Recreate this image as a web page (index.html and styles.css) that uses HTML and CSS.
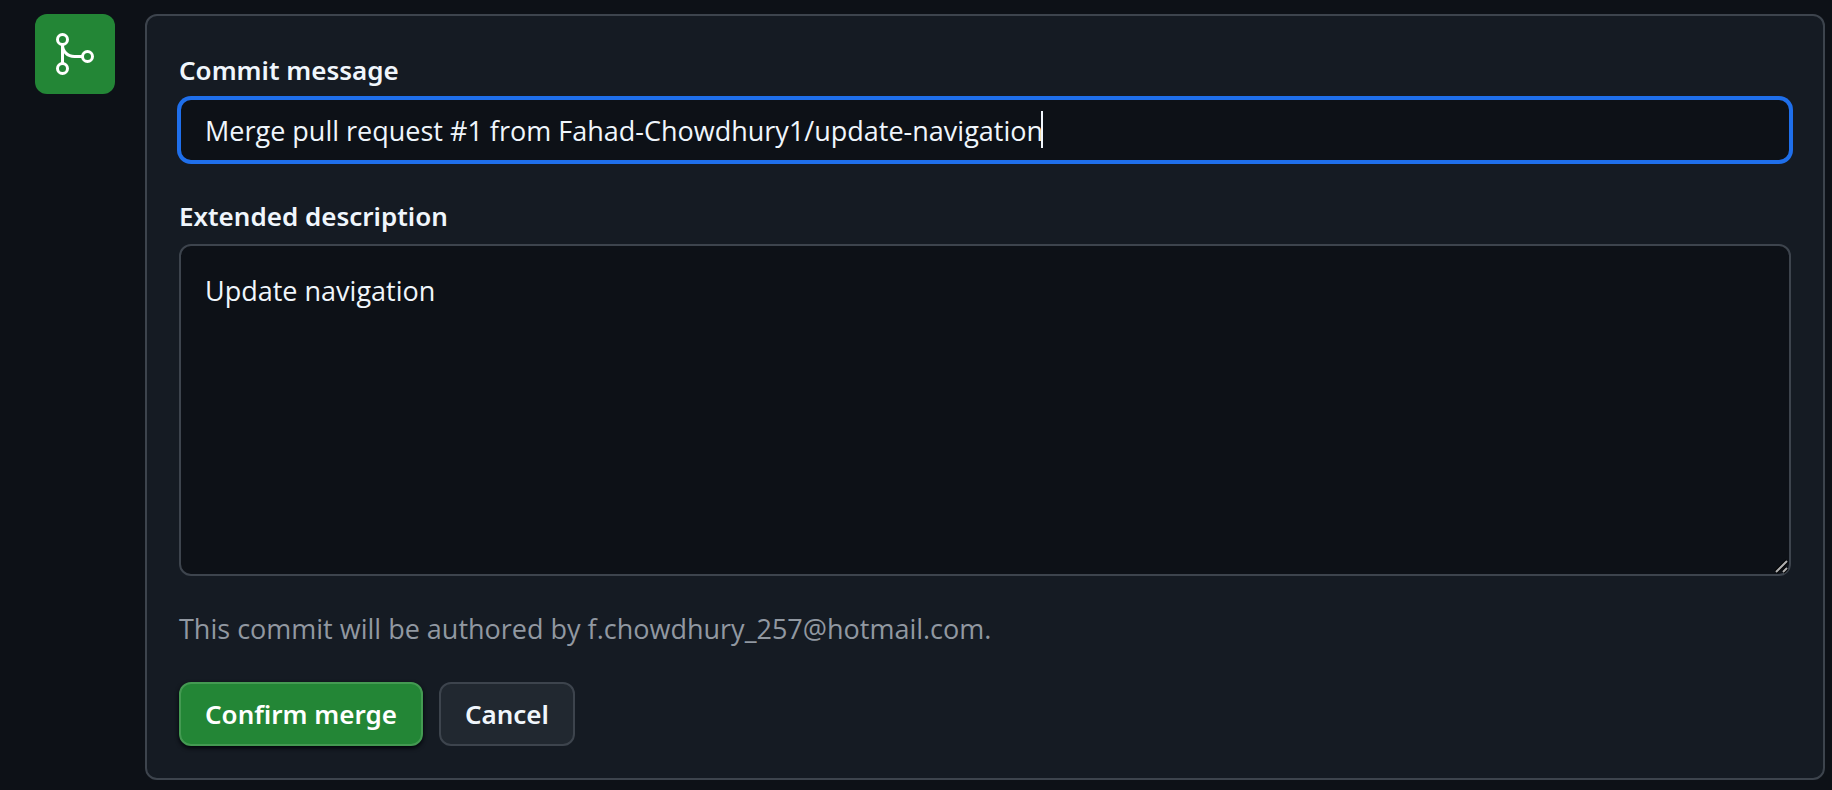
FILE: index.html
```html
<!DOCTYPE html>
<html lang="en">
<head>
<meta charset="utf-8">
<title>Confirm merge</title>
<link rel="stylesheet" href="styles.css">
</head>
<body>
<main class="merge">
  <div class="badge">
    <svg class="badge-icon" viewBox="0 0 48 48" aria-hidden="true">
      <circle cx="11.5" cy="9.5" r="5"/>
      <circle cx="11.5" cy="38.5" r="5"/>
      <circle cx="36.5" cy="26.5" r="5"/>
      <path d="M11.5 14.5V33.5M11.5 14.5C11.5 21.500 16.500 26.500 23.500 26.500H31.500"/>
    </svg>
  </div>
  <form class="card">
    <div class="field">
      <label class="label" for="title">Commit message</label>
      <div class="control">
        <input class="input" id="title" type="text" value="Merge pull request #1 from Fahad-Chowdhury1/update-navigation">
        <span class="caret"></span>
      </div>
    </div>
    <div class="field">
      <label class="label" for="description">Extended description</label>
      <div class="control">
        <textarea class="input area" id="description">Update navigation</textarea>
        <svg class="grip" viewBox="0 0 16 16" aria-hidden="true">
          <path class="grip-shade" d="M3 14L14 3M10 14L14 10"/>
          <path class="grip-line" d="M3 14L14 3M10 14L14 10"/>
        </svg>
      </div>
    </div>
    <p class="note">This commit will be authored by f.chowdhury_257@hotmail.com.</p>
    <div class="actions">
      <button class="button primary" type="submit">Confirm merge</button>
      <button class="button" type="button">Cancel</button>
    </div>
  </form>
</main>
</body>
</html>
```
FILE: styles.css
```css
* {
  box-sizing: border-box;
}

body {
  margin: 0;
  background: #0d1117;
  color: #f0f6fc;
  font: 27px/42px "Open Sans", "Noto Sans", sans-serif;
}

.merge {
  display: flex;
  align-items: flex-start;
  gap: 30px;
  padding: 14px 7px 10px 35px;
}

.badge {
  flex: none;
  display: grid;
  place-items: center;
  width: 80px;
  height: 80px;
  border-radius: 12px;
  background: #238636;
}

.badge-icon {
  width: 48px;
  height: 48px;
  fill: none;
  stroke: #fff;
  stroke-width: 3;
}

.card {
  flex: 1;
  min-width: 0;
  display: flex;
  flex-direction: column;
  gap: 32px;
  padding: 32px;
  border: 2px solid #3d444d;
  border-radius: 12px;
  background: #151b23;
}

.field {
  display: flex;
  flex-direction: column;
  gap: 6px;
}

.label {
  font: 600 26px/44px "Noto Sans", "Open Sans", sans-serif;
}

.control {
  position: relative;
  display: flex;
}

.input {
  flex: 1;
  min-width: 0;
  height: 64px;
  margin: 0;
  padding: 0 24px;
  border: 2px solid #1f6feb;
  border-radius: 12px;
  outline: none;
  box-shadow: 0 0 0 2px #1f6feb;
  background: #0d1117;
  color: inherit;
  font: inherit;
}

.area {
  height: 332px;
  padding: 24px;
  border-color: #3d444d;
  box-shadow: none;
  resize: none;
}

.caret {
  position: absolute;
  top: 13px;
  left: 862px;
  width: 2px;
  height: 37px;
  background: #f0f6fc;
}

.grip {
  position: absolute;
  right: 2px;
  bottom: 2px;
  width: 16px;
  height: 16px;
  fill: none;
}

.grip-shade {
  stroke: #000;
  stroke-width: 4;
}

.grip-line {
  stroke: #b0b0b0;
  stroke-width: 2;
}

.note {
  margin: 0;
  color: #9198a1;
}

.actions {
  display: flex;
  gap: 16px;
}

.button {
  height: 64px;
  padding: 0 24px;
  border: 2px solid #3d444d;
  border-radius: 12px;
  background: #212830;
  color: inherit;
  font: 600 26px/44px "Noto Sans", "Open Sans", sans-serif;
}

.primary {
  border-color: #449a52;
  background: #238636;
  box-shadow: 0 2px 4px #010409;
  color: #fff;
}
```
